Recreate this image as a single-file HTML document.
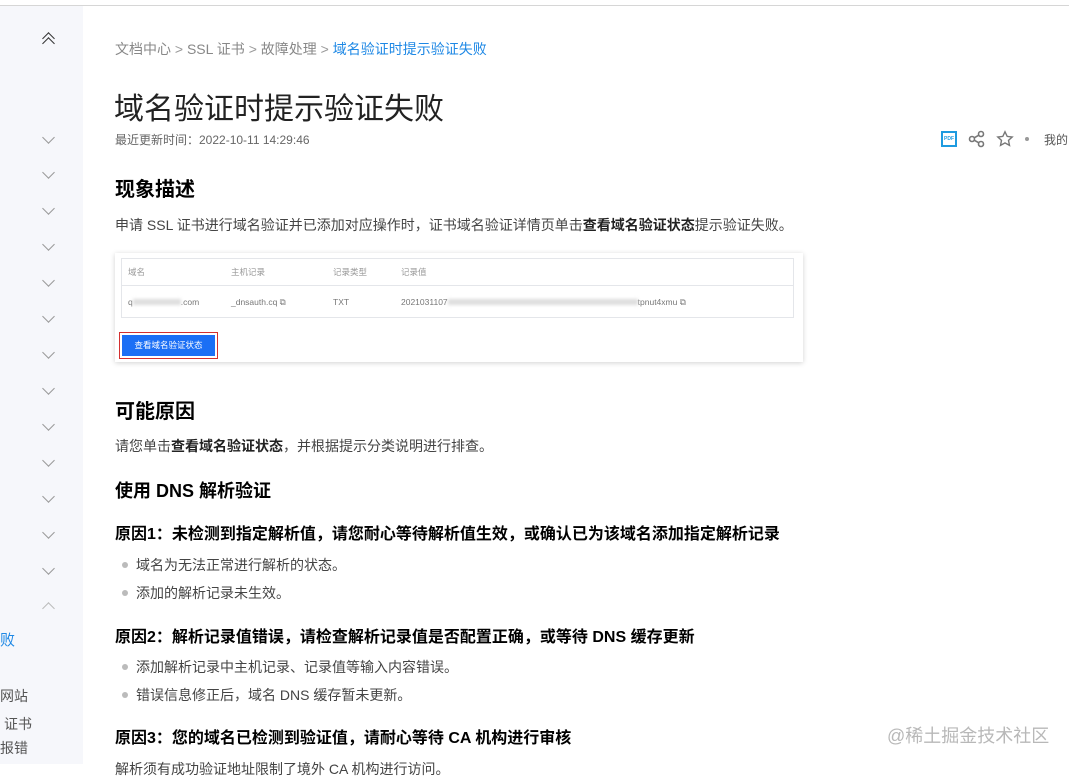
<!DOCTYPE html>
<html><head><meta charset="utf-8"><style>
*{margin:0;padding:0;box-sizing:border-box}
body{width:1069px;height:764px;overflow:hidden;background:#fff;position:relative;font-family:"Liberation Sans","Noto Sans CJK SC",sans-serif;color:#333}
.a{position:absolute;white-space:nowrap}
.side{position:absolute;left:0;top:6px;width:83px;height:758px;background:#f6f7fb}
.top{position:absolute;left:0;top:5px;width:1069px;height:1px;background:#d6d6d6}
.chev{position:absolute;left:44px;width:9px;height:9px;border-right:1px solid #999;border-bottom:1px solid #999;transform:rotate(45deg)}
.chevu{position:absolute;left:44px;width:9px;height:9px;border-left:1px solid #999;border-top:1px solid #999;transform:rotate(45deg)}
.h2{font-weight:bold;font-size:20px;color:#000}
.h4{font-weight:bold;font-size:16px;color:#000}
.p{font-size:14px;color:#444}
.li{font-size:14px;color:#444}
.li:before{content:"";position:absolute;left:-14px;top:7px;width:6px;height:6px;border-radius:50%;background:#bbb}
.t{font-size:8.5px;color:#777}
</style></head><body>
<div class="top"></div>
<div class="side">
<div class="chevu" style="top:28px;border-color:#333"></div>
<div class="chevu" style="top:33px;border-color:#333"></div>
</div>
<div class="chev" style="top:133px"></div>
<div class="chev" style="top:168px"></div>
<div class="chev" style="top:204px"></div>
<div class="chev" style="top:240px"></div>
<div class="chev" style="top:276px"></div>
<div class="chev" style="top:312px"></div>
<div class="chev" style="top:348px"></div>
<div class="chev" style="top:384px"></div>
<div class="chev" style="top:420px"></div>
<div class="chev" style="top:456px"></div>
<div class="chev" style="top:492px"></div>
<div class="chev" style="top:528px"></div>
<div class="chev" style="top:564px"></div>
<div class="chevu" style="top:604px;border-color:#bbb"></div>
<div class="a" style="left:0;top:629px;font-size:15px;color:#1e88e5">败</div>
<div class="a" style="left:0;top:686px;font-size:14px;color:#555">网站</div>
<div class="a" style="left:4px;top:714px;font-size:14px;color:#555">证书</div>
<div class="a" style="left:0;top:738px;font-size:14px;color:#555">报错</div>

<div class="a" style="left:115px;top:39px;font-size:14px;color:#888">文档中心 <span style="color:#999">&gt;</span> SSL 证书 <span style="color:#999">&gt;</span> 故障处理 <span style="color:#999">&gt;</span> <span style="color:#1e88e5">域名验证时提示验证失败</span></div>
<div class="a" style="left:114px;top:84px;font-size:30px;color:#222">域名验证时提示验证失败</div>
<div class="a" style="left:115px;top:131px;font-size:12px;color:#666">最近更新时间：2022-10-11 14:29:46</div>

<div class="a" style="left:941px;top:131px;width:16px;height:16px;border:2px solid #1e9be0;font-size:5px;color:#1e9be0;line-height:12px;text-align:center;font-weight:bold">PDF</div>
<svg class="a" style="left:968px;top:130px" width="18" height="18" viewBox="0 0 18 18" fill="none" stroke="#777" stroke-width="1.6"><circle cx="13" cy="4" r="2.5"/><circle cx="4" cy="9" r="2.5"/><circle cx="13" cy="14" r="2.5"/><path d="M6.2 7.8l4.6-2.6M6.2 10.2l4.6 2.6"/></svg>
<svg class="a" style="left:996px;top:130px" width="18" height="18" viewBox="0 0 18 18" fill="none" stroke="#777" stroke-width="1.4"><path d="M9 1.8l2.2 4.6 5 .6-3.7 3.4 1 5-4.5-2.5-4.5 2.5 1-5L1.8 7l5-.6z"/></svg>
<div class="a" style="left:1025px;top:137px;width:4px;height:4px;border-radius:50%;background:#999"></div>
<div class="a" style="left:1044px;top:131px;font-size:12px;color:#555">我的</div>

<div class="a h2" style="left:115px;top:173px">现象描述</div>
<div class="a p" style="left:115px;top:215px">申请 SSL 证书进行域名验证并已添加对应操作时，证书域名验证详情页单击<b style="color:#222">查看域名验证状态</b>提示验证失败。</div>

<div class="a" style="left:115px;top:253px;width:688px;height:109px;background:#fff;box-shadow:0 1px 5px rgba(0,0,0,.18)"></div>
<div class="a" style="left:121px;top:258px;width:673px;height:60px;border:1px solid #e4e6ea"></div>
<div class="a" style="left:122px;top:285px;width:671px;height:1px;background:#e4e6ea"></div>
<div class="a t" style="left:128px;top:266px;color:#999">域名</div>
<div class="a t" style="left:231px;top:266px;color:#999">主机记录</div>
<div class="a t" style="left:333px;top:266px;color:#999">记录类型</div>
<div class="a t" style="left:401px;top:266px;color:#999">记录值</div>
<div class="a t" style="left:128px;top:297px">q<span style="display:inline-block;width:48px;height:6px;background:#ddd;filter:blur(1.5px)"></span>.com</div>
<div class="a t" style="left:231px;top:297px">_dnsauth.cq ⧉</div>
<div class="a t" style="left:333px;top:297px">TXT</div>
<div class="a t" style="left:401px;top:297px">2021031107<span style="display:inline-block;width:190px;height:6px;background:#ddd;filter:blur(1.5px)"></span>tpnut4xmu ⧉</div>
<div class="a" style="left:119px;top:332px;width:99px;height:27px;border:1.5px solid #d32f2f"></div>
<div class="a" style="left:122px;top:335px;width:93px;height:21px;background:#1b6ff5;color:#fff;font-size:8.5px;line-height:21px;text-align:center">查看域名验证状态</div>

<div class="a h2" style="left:115px;top:395px">可能原因</div>
<div class="a p" style="left:115px;top:436px">请您单击<b style="color:#222">查看域名验证状态</b>，并根据提示分类说明进行排查。</div>
<div class="a" style="left:115px;top:477px;font-size:18px;font-weight:bold;color:#000">使用 DNS 解析验证</div>
<div class="a h4" style="left:115px;top:520px">原因1：未检测到指定解析值，请您耐心等待解析值生效，或确认已为该域名添加指定解析记录</div>
<div class="a li" style="left:136px;top:555px">域名为无法正常进行解析的状态。</div>
<div class="a li" style="left:136px;top:583px">添加的解析记录未生效。</div>
<div class="a h4" style="left:115px;top:623px">原因2：解析记录值错误，请检查解析记录值是否配置正确，或等待 DNS 缓存更新</div>
<div class="a li" style="left:136px;top:657px">添加解析记录中主机记录、记录值等输入内容错误。</div>
<div class="a li" style="left:136px;top:685px">错误信息修正后，域名 DNS 缓存暂未更新。</div>
<div class="a h4" style="left:115px;top:724px">原因3：您的域名已检测到验证值，请耐心等待 CA 机构进行审核</div>
<div class="a p" style="left:115px;top:759px">解析须有成功验证地址限制了境外 CA 机构进行访问。</div>
<div class="a" style="left:887px;top:722px;font-size:18px;color:#b8b8b8">@稀土掘金技术社区</div>
</body></html>
